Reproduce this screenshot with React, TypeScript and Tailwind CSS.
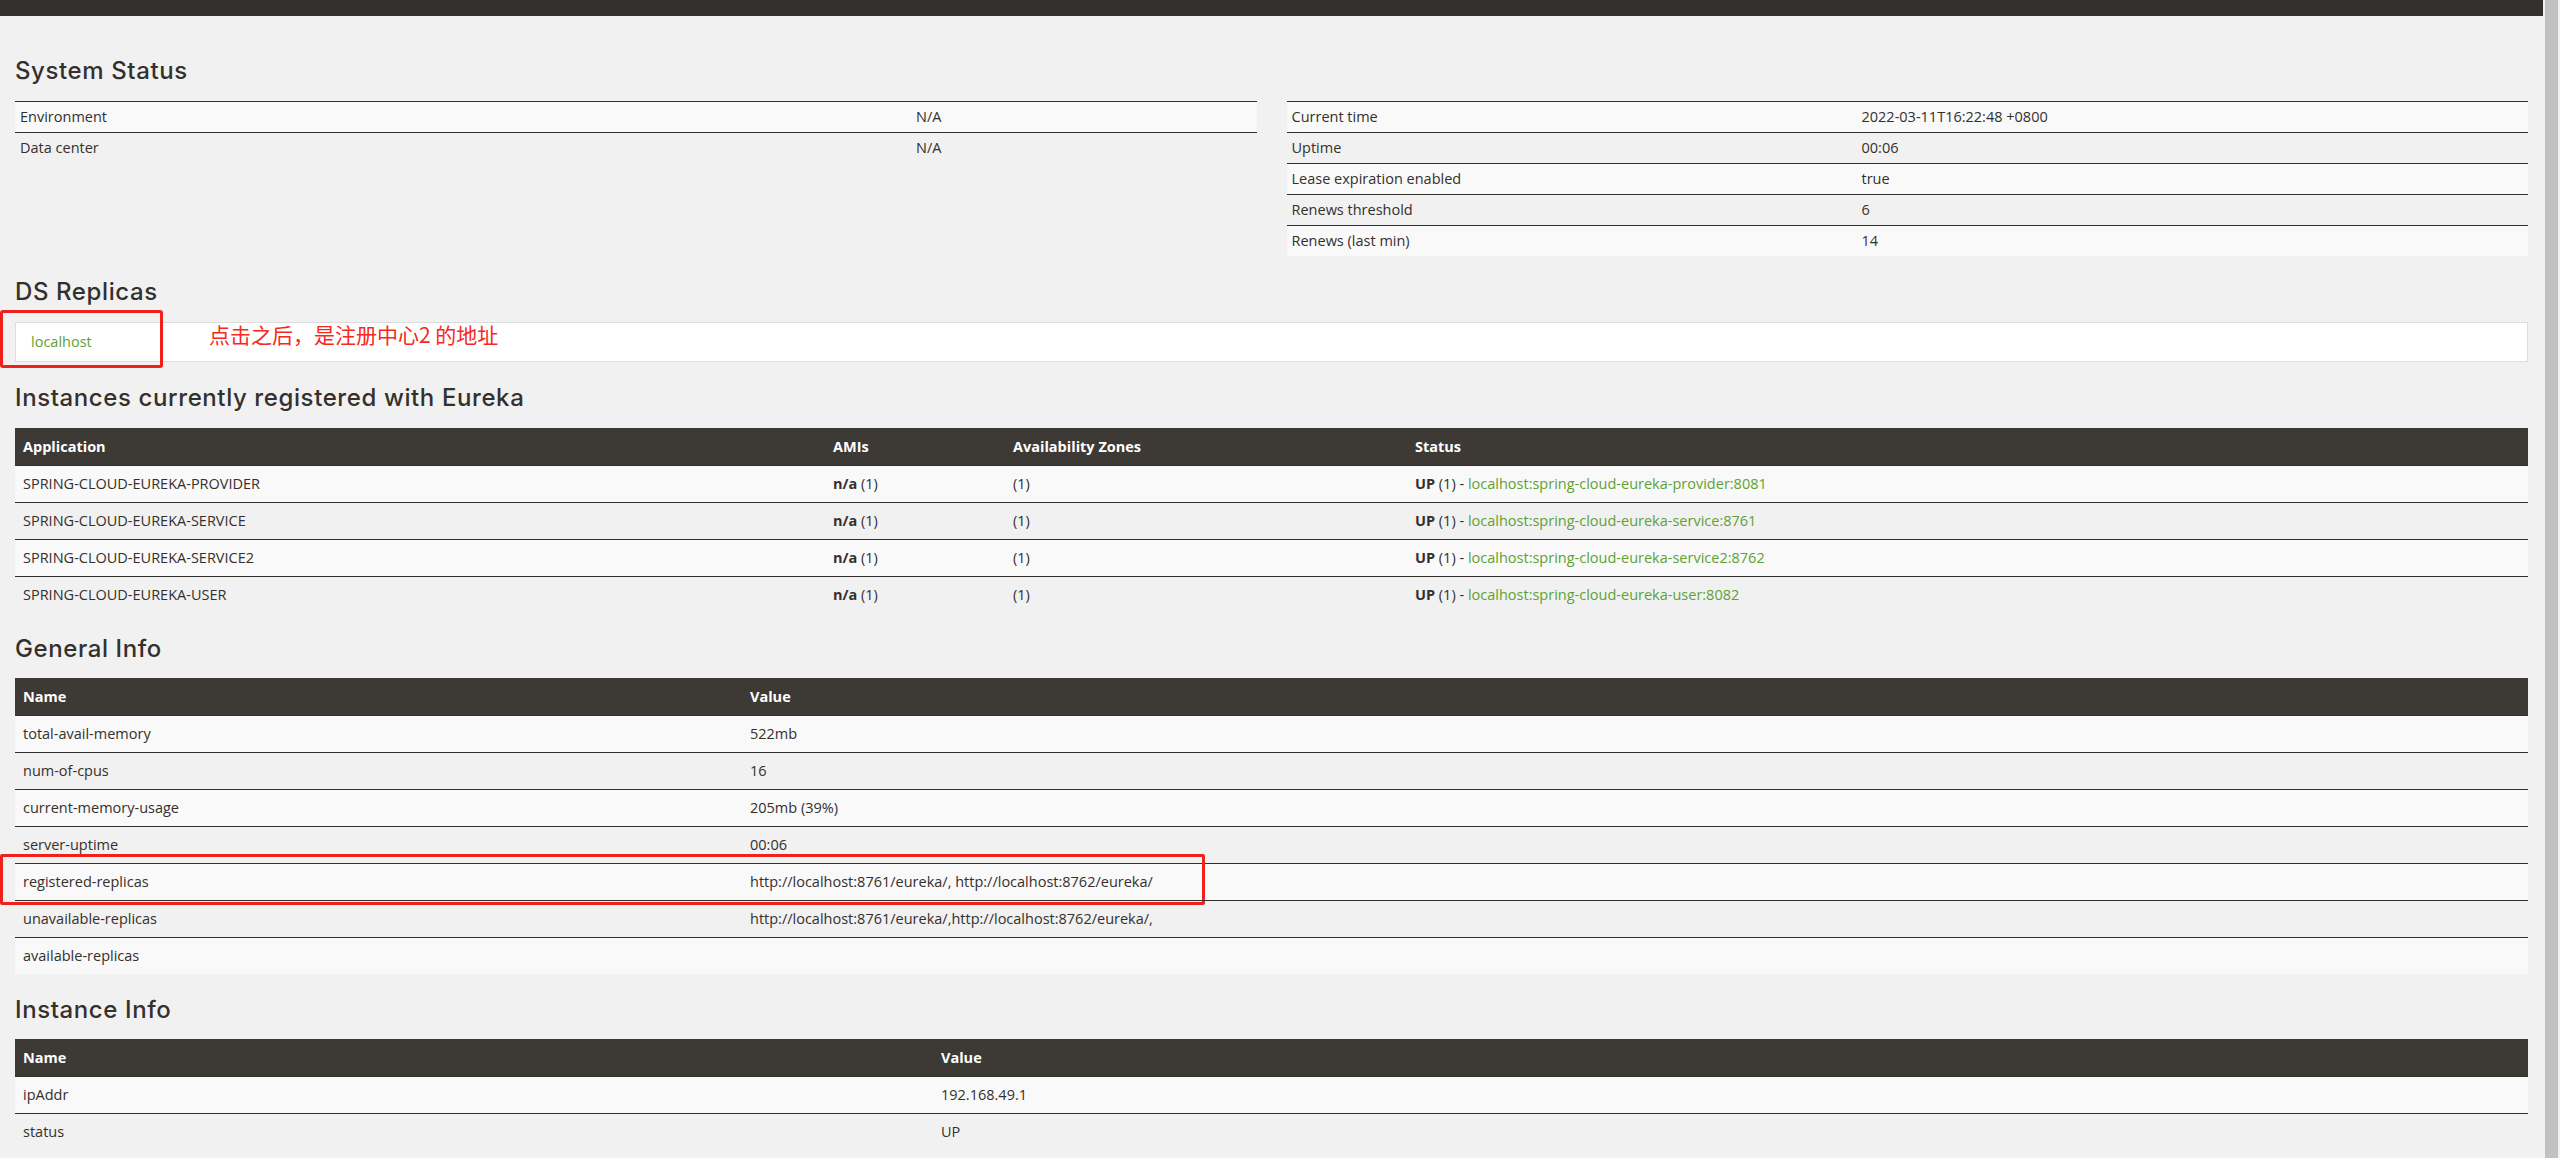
import type { ReactNode } from 'react';

const statusLeft: [string, string][] = [
  ['Environment', 'N/A'],
  ['Data center', 'N/A'],
];

const statusRight: [string, string][] = [
  ['Current time', '2022-03-11T16:22:48 +0800'],
  ['Uptime', '00:06'],
  ['Lease expiration enabled', 'true'],
  ['Renews threshold', '6'],
  ['Renews (last min)', '14'],
];

const apps = [
  ['SPRING-CLOUD-EUREKA-PROVIDER', 'localhost:spring-cloud-eureka-provider:8081'],
  ['SPRING-CLOUD-EUREKA-SERVICE', 'localhost:spring-cloud-eureka-service:8761'],
  ['SPRING-CLOUD-EUREKA-SERVICE2', 'localhost:spring-cloud-eureka-service2:8762'],
  ['SPRING-CLOUD-EUREKA-USER', 'localhost:spring-cloud-eureka-user:8082'],
];

const generalInfo: [string, string][] = [
  ['total-avail-memory', '522mb'],
  ['num-of-cpus', '16'],
  ['current-memory-usage', '205mb (39%)'],
  ['server-uptime', '00:06'],
  ['registered-replicas', 'http://localhost:8761/eureka/, http://localhost:8762/eureka/'],
  ['unavailable-replicas', 'http://localhost:8761/eureka/,http://localhost:8762/eureka/,'],
  ['available-replicas', ''],
];

const instanceInfo: [string, string][] = [
  ['ipAddr', '192.168.49.1'],
  ['status', 'UP'],
];

const SectionTitle = ({ children, tight }: { children: ReactNode; tight?: boolean }) => (
  <h1
    className={`pt-[22px] ${tight ? 'pb-[15px]' : 'pb-[16px]'} font-['Inter',sans-serif] text-[24px] leading-[28px] font-medium tracking-[0.6px] text-[#34302d]`}
  >
    {children}
  </h1>
);

// condensed key/value table used in "System Status"
const StatusTable = ({ rows, cols }: { rows: [string, string][]; cols: string }) => (
  <div>
    {rows.map(([k, v], i) => (
      <div
        key={k}
        className={`grid ${cols} border-t border-[#34302d] ${i % 2 === 0 ? 'bg-[#f9f9f9]' : ''}`}
      >
        <div className="px-[5px] py-[5px]">{k}</div>
        <div className="px-[5px] py-[5px]">{v}</div>
      </div>
    ))}
  </div>
);

const InfoTable = ({ rows, cols }: { rows: [string, string][]; cols: string }) => (
  <div>
    <div className={`grid ${cols} bg-[#3d3934] font-bold text-white`}>
      <div className="px-[8px] py-[8px] leading-[21px]">Name</div>
      <div className="px-[8px] py-[8px] leading-[21px]">Value</div>
    </div>
    {rows.map(([k, v], i) => (
      <div
        key={k}
        className={`relative grid ${cols} border-t border-[#34302d] ${i % 2 === 0 ? 'bg-[#f9f9f9]' : ''}`}
      >
        <div className="px-[8px] py-[8px]">{k}</div>
        <div className="px-[8px] py-[8px]">{v}</div>
        {k === 'registered-replicas' && (
          <div className="pointer-events-none absolute left-[-15px] top-[-10px] h-[51px] w-[1205px] rounded-[2px] border-[3px] border-[#f0201c]" />
        )}
      </div>
    ))}
  </div>
);

export default function App() {
  return (
    <div className="flex h-[1158px] overflow-hidden bg-[#f1f1f1] font-['Open_Sans',sans-serif] text-[14.5px] leading-[20px] text-[#34302d]">
      <div className="min-w-0 flex-1">
        <div className="h-[16px] bg-[#34302d]" />
        <div className="px-[15px] pt-[19px]">
          <SectionTitle>System Status</SectionTitle>
          <div className="grid grid-cols-2 items-start gap-[30px]">
            <StatusTable rows={statusLeft} cols="grid-cols-[896px_1fr]" />
            <StatusTable rows={statusRight} cols="grid-cols-[570px_1fr]" />
          </div>

          <SectionTitle>DS Replicas</SectionTitle>
          <div className="relative">
            <div className="border border-[#dddddd] bg-white px-[15px] py-[9px]">
              <a className="text-[#5fa134]">localhost</a>
            </div>
            <div className="pointer-events-none absolute left-[-15px] top-[-12px] h-[58px] w-[163px] rounded-[3px] border-[3px] border-[#f0201c]" />
            <div className="absolute left-[194px] top-[-4px] font-['Noto_Sans_CJK_SC',sans-serif] text-[21px] leading-[32px] text-[#f52a1d]">
              点击之后，是注册中心2 的地址
            </div>
          </div>

          <SectionTitle>Instances currently registered with Eureka</SectionTitle>
          <div>
            <div className="grid grid-cols-[810px_180px_402px_1fr] bg-[#3d3934] font-bold text-white">
              <div className="px-[8px] py-[8px] leading-[21px]">Application</div>
              <div className="px-[8px] py-[8px] leading-[21px]">AMIs</div>
              <div className="px-[8px] py-[8px] leading-[21px]">Availability Zones</div>
              <div className="px-[8px] py-[8px] leading-[21px]">Status</div>
            </div>
            {apps.map(([name, link], i) => (
              <div
                key={name}
                className={`grid grid-cols-[810px_180px_402px_1fr] border-t border-[#34302d] ${i % 2 === 0 ? 'bg-[#f9f9f9]' : ''}`}
              >
                <div className="px-[8px] py-[8px]">{name}</div>
                <div className="px-[8px] py-[8px]">
                  <b>n/a</b> (1)
                </div>
                <div className="px-[8px] py-[8px]">(1)</div>
                <div className="px-[8px] py-[8px]">
                  <b>UP</b> (1) - <a className="text-[#5fa134]">{link}</a>
                </div>
              </div>
            ))}
          </div>

          <SectionTitle tight>General Info</SectionTitle>
          <InfoTable rows={generalInfo} cols="grid-cols-[727px_1fr]" />

          <SectionTitle tight>Instance Info</SectionTitle>
          <InfoTable rows={instanceInfo} cols="grid-cols-[918px_1fr]" />
        </div>
      </div>
      <div className="w-[17px] shrink-0 bg-[#f1f1f1] px-[2px]">
        <div className="h-full bg-[#c1c1c1]" />
      </div>
    </div>
  );
}
